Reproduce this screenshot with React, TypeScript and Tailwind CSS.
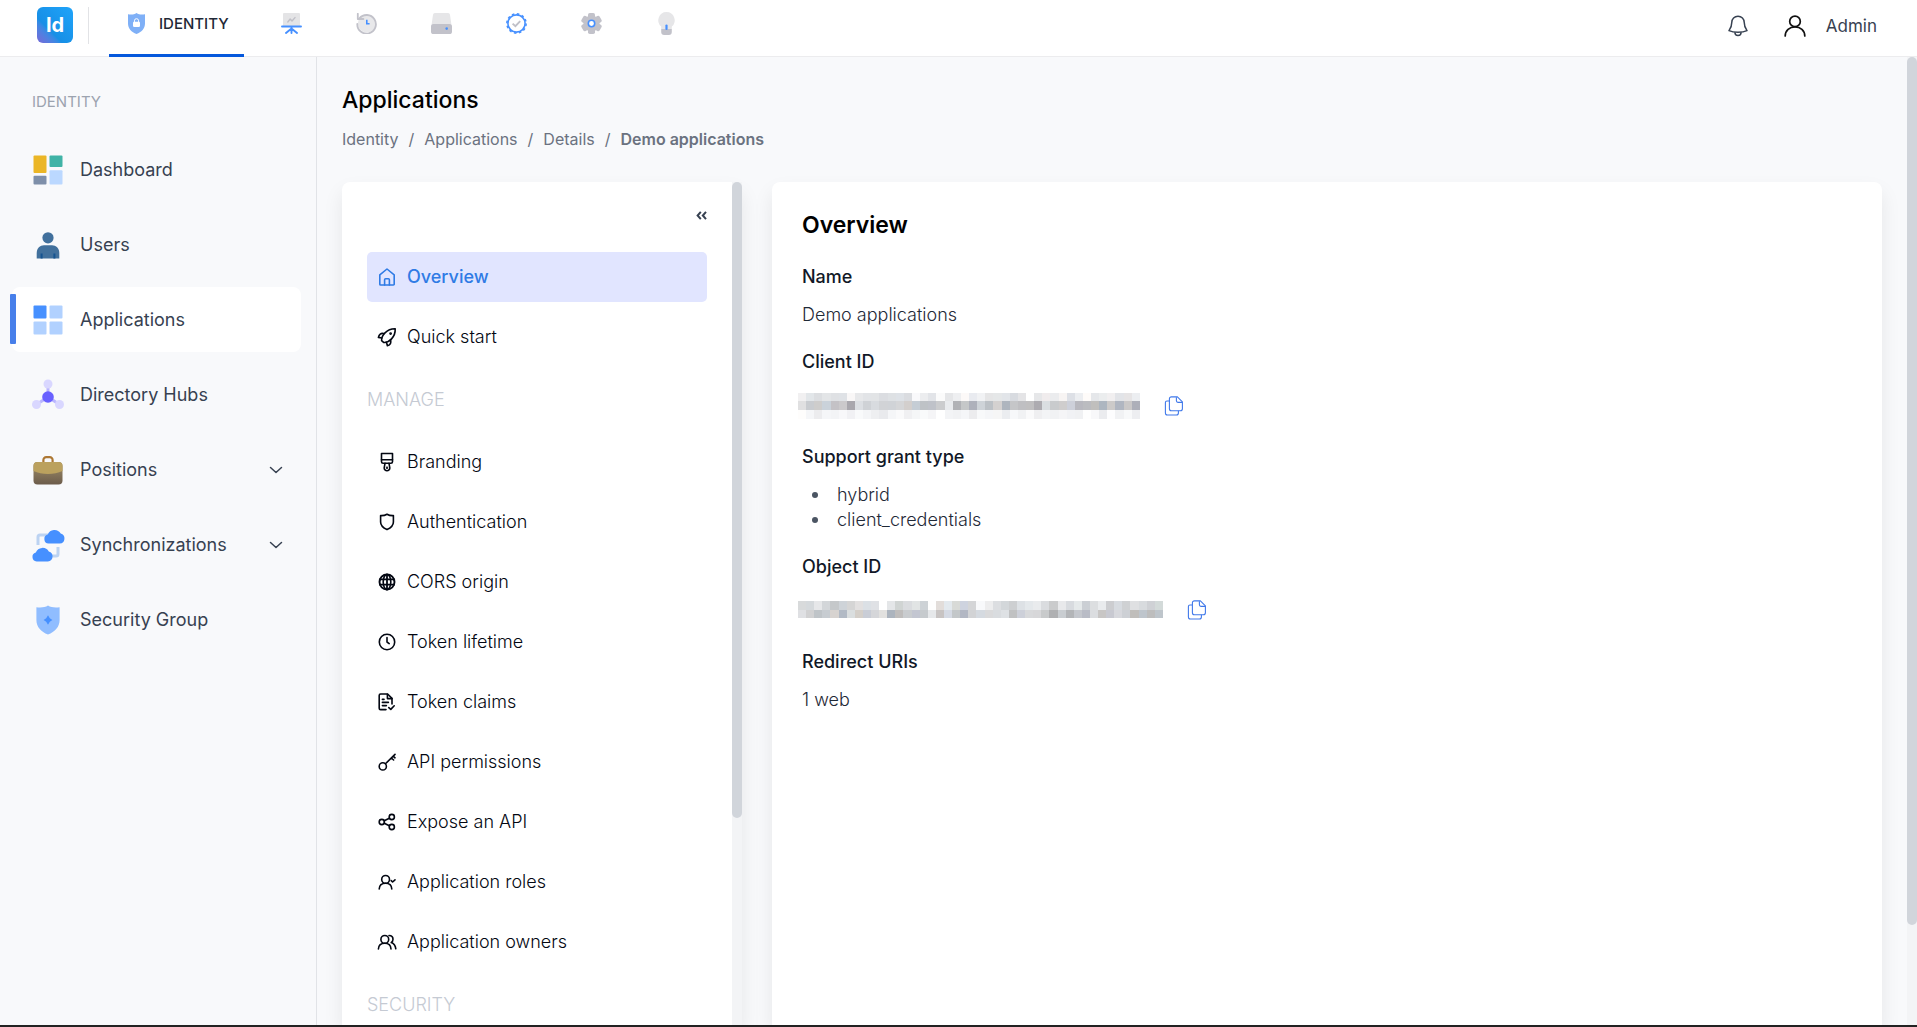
import React, { useState } from 'react';

/* ---------- header icons ---------- */

const ShieldLockIcon = () => (
  <svg width="21" height="21" viewBox="0 0 21 21" fill="none">
    <path d="M10.5 0 C8 1.7 5.2 1.8 2 1.2 V10.5 C2 15.6 5.5 19 10.5 21 C15.5 19 19 15.6 19 10.5 V1.2 C15.8 1.8 13 1.7 10.5 0 Z" fill="#7fb0f7" />
    <path d="M8.4 9.5 V7.8 a2.1 2.1 0 0 1 4.2 0 V9.5" stroke="#fff" strokeWidth="1" />
    <rect x="7" y="8.8" width="7" height="5.2" rx="1.2" fill="#fff" />
  </svg>
);

const BoardIcon = () => (
  <svg width="21" height="21" viewBox="0 0 21 21" fill="none">
    <path d="M2 1 A1 1 0 0 1 3 0 H18 A1 1 0 0 1 19 1 V13 H2 Z" fill="#e4e4e6" />
    <path d="M6.8 9 L9.2 6 L11 8 L14 4.6" stroke="#c0c0c8" strokeWidth="1.4" strokeLinecap="round" strokeLinejoin="round" />
    <path d="M1 13.5 H20 M10.5 13.5 V20 M10.5 15.5 L5 20 M10.5 15.5 L16 20" stroke="#4690ff" strokeWidth="1.9" strokeLinecap="round" />
  </svg>
);

const HistoryIcon = () => (
  <svg width="21" height="21" viewBox="0 0 21 21" fill="none">
    <circle cx="10.8" cy="10.5" r="9" fill="#e8e8ea" />
    <path d="M3.4 5.4 A9.3 9.3 0 1 1 1.3 10.8" stroke="#c2c2ca" strokeWidth="1.8" strokeLinecap="round" />
    <path d="M1.8 0.8 V6 H7.4" stroke="#c2c2ca" strokeWidth="1.8" strokeLinecap="round" strokeLinejoin="round" />
    <path d="M10.8 6.8 V10.8 H13.6" stroke="#4690ff" strokeWidth="1.6" />
  </svg>
);

const DriveIcon = () => (
  <svg width="21" height="21" viewBox="0 0 21 21" fill="none">
    <path d="M4 0 H17 A2 2 0 0 1 19 1.7 L20.6 13 H0.4 L2 1.7 A2 2 0 0 1 4 0 Z" fill="#e6e6e8" />
    <rect y="11" width="21" height="10" rx="2.6" fill="#c2c2ca" />
    <circle cx="15.7" cy="15.6" r="1.3" fill="#4690ff" />
  </svg>
);

const BadgeIcon = () => (
  <svg width="21" height="21" viewBox="0 0 21 21" fill="none">
    <circle cx="10.5" cy="10.5" r="8.6" stroke="#4690ff" strokeWidth="1.6" />
    <circle cx="10.5" cy="10.5" r="9.6" stroke="#4690ff" strokeWidth="1.6" strokeDasharray="2.5 2.53" />
    <path d="M6.6 10.6 L9.4 13.2 L14.2 8.2" stroke="#c0c0c8" strokeWidth="1.9" />
  </svg>
);

const GearIcon = () => (
  <svg width="21" height="21" viewBox="0 0 21 21" fill="none">
    <g fill="#c2c2ca">
      <circle cx="10.5" cy="10.5" r="8" />
      <rect x="7" width="7" height="21" rx="1.8" />
      <rect x="7" width="7" height="21" rx="1.8" transform="rotate(60 10.5 10.5)" />
      <rect x="7" width="7" height="21" rx="1.8" transform="rotate(120 10.5 10.5)" />
    </g>
    <circle cx="10.5" cy="10.5" r="3.2" fill="#fff" stroke="#4690ff" strokeWidth="1.6" />
  </svg>
);

const BulbIcon = () => (
  <svg width="21" height="23" viewBox="0 0 21 23" fill="none">
    <path d="M10.5 0 A8.3 8.3 0 0 1 15.8 14.6 V17 H5.2 V14.6 A8.3 8.3 0 0 1 10.5 0 Z" fill="#e6e6e8" />
    <path d="M5.2 17 H15.8 V20 A3 3 0 0 1 12.8 23 H8.2 A3 3 0 0 1 5.2 20 Z" fill="#c2c2ca" />
    <path d="M10.5 17 V13.5" stroke="#4690ff" strokeWidth="2.2" strokeLinecap="round" />
  </svg>
);

const BellIcon = () => (
  <svg width="20" height="22" viewBox="0 0 20 22" fill="none" stroke="#374151" strokeWidth="1.5" strokeLinejoin="round">
    <path d="M10 1.2 C6.4 1.2 3.8 3.8 3.8 7.3 C3.8 11 3.4 12.6 1 15.6 C3.6 16.8 6.6 17.2 10 17.2 C13.4 17.2 16.4 16.8 19 15.6 C16.6 12.6 16.2 11 16.2 7.3 C16.2 3.8 13.6 1.2 10 1.2 Z" />
    <path d="M6.9 17.2 a3.1 3.3 0 0 0 6.2 0" />
  </svg>
);

const UserIcon = () => (
  <svg width="22" height="22" viewBox="0 0 22 22" fill="none" stroke="#111" strokeWidth="1.7" strokeLinecap="round">
    <circle cx="11" cy="6.4" r="5.3" />
    <path d="M1.2 21 C1.2 15.5 5.6 11.8 11 11.8 C16.4 11.8 20.8 15.5 20.8 21" />
  </svg>
);

/* ---------- sidebar icons ---------- */

const DashboardIcon = () => (
  <svg width="32" height="32" viewBox="0 0 32 32">
    <rect x="1.5" y="1.5" width="13" height="17.5" rx="1" fill="#ebb626" />
    <rect x="1.5" y="21.7" width="13" height="8.8" rx="1" fill="#7e8fa9" />
    <rect x="17.5" y="1.5" width="13" height="11.5" rx="1" fill="#40b3a6" />
    <rect x="17.5" y="16.3" width="13" height="14.2" rx="1" fill="#bbd8ff" />
  </svg>
);

const UsersIcon = () => (
  <svg width="32" height="32" viewBox="0 0 32 32">
    <circle cx="16" cy="8.8" r="5.6" fill="#41709c" />
    <path d="M4.7 29.5 V24 C4.7 19 8 16.2 12 16.2 H20 C24 16.2 27.3 19 27.3 24 V29.5 Z" fill="#41709c" />
    <path d="M8.6 24.5 h2 v5 h-2 z M21.4 24.5 h2 v5 h-2 z" fill="#145390" />
  </svg>
);

const ApplicationsIcon = () => (
  <svg width="32" height="32" viewBox="0 0 32 32">
    <rect x="1.5" y="1.5" width="13" height="13" rx="1" fill="#4690ff" />
    <g fill="#b1d1ff">
      <rect x="17.5" y="1.5" width="13" height="13" rx="1" />
      <rect x="1.5" y="17.5" width="13" height="13" rx="1" />
      <rect x="17.5" y="17.5" width="13" height="13" rx="1" />
    </g>
  </svg>
);

const HubIcon = () => (
  <svg width="32" height="32" viewBox="0 0 32 32">
    <path d="M16 18 V6 M16 18 L4.5 25.5 M16 18 L27.5 25.5" stroke="#b9b5ff" strokeWidth="3" />
    <g fill="#d9d7ff">
      <circle cx="16" cy="5" r="4.5" />
      <circle cx="4.5" cy="25.5" r="4.5" />
      <circle cx="27.5" cy="25.5" r="4.5" />
    </g>
    <circle cx="16" cy="18" r="5.8" fill="#6961ff" />
  </svg>
);

const BriefcaseIcon = () => (
  <svg width="32" height="32" viewBox="0 0 32 32" fill="none">
    <defs>
      <linearGradient id="case" x1="0" y1="0" x2="0" y2="1">
        <stop offset="0.4" stopColor="#8b7a5c" />
        <stop offset="1" stopColor="#6c5c4b" />
      </linearGradient>
    </defs>
    <path d="M11.4 8 V6 a2.8 2.8 0 0 1 2.8 -2.8 h3.6 A2.8 2.8 0 0 1 20.6 6 V8" stroke="#ad7834" strokeWidth="2.2" />
    <rect x="1.5" y="8" width="29" height="22.5" rx="4" fill="url(#case)" />
    <path d="M1.5 17 V12 a4 4 0 0 1 4 -4 h21 a4 4 0 0 1 4 4 V17 C22 21 10 21 1.5 17 Z" fill="#bba15e" />
  </svg>
);

const SyncIcon = () => (
  <svg width="34" height="34" viewBox="0 0 34 34" fill="none" className="shrink-0">
    <path d="M7 17 V9 a2 2 0 0 1 2 -2 H17 M27 19 V26 a2 2 0 0 1 -2 2 H19" stroke="#bcd3f2" strokeWidth="3" />
    <g fill="#4690ff">
      <path d="M17.5 15.6 a4.6 4.6 0 0 1 -0.8 -9 a7.3 7.3 0 0 1 13 -1 a5.1 5.1 0 0 1 -0.9 10 Z" />
      <path d="M5.6 33.4 a4.6 4.6 0 0 1 -0.8 -9 a7.3 7.3 0 0 1 13 -1 a5.1 5.1 0 0 1 -0.9 10 Z" />
    </g>
  </svg>
);

const SecurityIcon = () => (
  <svg width="32" height="32" viewBox="0 0 32 32">
    <path d="M16 1.5 C13 3.4 9 3.8 4.4 3.2 V16 C4.4 23 9 27.8 16 30.5 C23 27.8 27.6 23 27.6 16 V3.2 C23 3.8 19 3.4 16 1.5 Z" fill="#90bdff" />
    <path d="M16 11.2 L17.8 14.2 L20.4 16 L17.8 17.8 L16 20.8 L14.2 17.8 L11.6 16 L14.2 14.2 Z" fill="#4690ff" />
  </svg>
);

const ChevronIcon = () => (
  <svg width="14" height="8" viewBox="0 0 14 8" fill="none" stroke="#374151" strokeWidth="1.5" strokeLinecap="round" strokeLinejoin="round">
    <path d="M1.5 1.5 L7 6.5 L12.5 1.5" />
  </svg>
);

/* ---------- application menu icons ---------- */

const Line = ({ children }: { children: React.ReactNode }) => (
  <svg width="20" height="20" viewBox="0 0 20 20" fill="none" stroke="currentColor" strokeWidth="1.6" strokeLinecap="round" strokeLinejoin="round" className="shrink-0">
    {children}
  </svg>
);

const HomeIcon = () => (
  <Line>
    <path d="M10 2 L2.8 7.8 V17.2 a0.8 0.8 0 0 0 0.8 0.8 H16.4 a0.8 0.8 0 0 0 0.8 -0.8 V7.8 Z" />
    <path d="M7.6 18 V12.8 a1 1 0 0 1 1 -1 H11.4 a1 1 0 0 1 1 1 V18" />
  </Line>
);

const RocketIcon = () => (
  <Line>
    <path d="M4.6 13.6 C4.2 9 9.5 1.6 18.2 1.8 C18.6 10 12 16 6.6 15.4 Z" />
    <path d="M6.6 6.6 C4 5.8 2 7.6 1.4 10.4 L4.8 11 M13.6 13.2 C14.4 16 12.8 18 10.4 18.8 L9.4 15.2" />
    <circle cx="13.6" cy="6.6" r="0.6" />
  </Line>
);

const BrushIcon = () => (
  <Line>
    <path d="M4.5 1.5 H15.5 V9.7 a1.6 1.6 0 0 1 -1.6 1.6 H6.1 a1.6 1.6 0 0 1 -1.6 -1.6 Z" />
    <path d="M4.5 7.7 H15.5 M8 11.3 L7.2 15.9 a2.8 2.8 0 1 0 5.6 0 L12 11.3" />
    <circle cx="10" cy="15.8" r="0.4" />
  </Line>
);

const ShieldIcon = () => (
  <Line>
    <path d="M10 2.2 C8 3.4 6 3.7 3.6 3.6 V10 C3.6 13.6 6.4 16 10 17.6 C13.6 16 16.4 13.6 16.4 10 V3.6 C14 3.7 12 3.4 10 2.2 Z" />
  </Line>
);

const GlobeIcon = () => (
  <Line>
    <circle cx="10" cy="10" r="7.5" strokeWidth="1.9" />
    <ellipse cx="10" cy="10" rx="3.8" ry="7.5" />
    <path d="M10 2.5 V17.5 M3 7.3 H17 M3 12.7 H17" strokeWidth="1.8" />
  </Line>
);

const ClockIcon = () => (
  <Line>
    <circle cx="10" cy="10" r="7.7" />
    <path d="M10 5.6 V10 L12.2 11.6" />
  </Line>
);

const ClaimsIcon = () => (
  <Line>
    <path d="M9 17.6 H3.6 a1.4 1.4 0 0 1 -1.4 -1.4 V3.4 A1.4 1.4 0 0 1 3.6 2 H10.6 L15 6.4 V12" />
    <path d="M10.4 2.2 V6.6 H15 M5.4 7.4 H7 M5.4 10.4 H11.4 M5.4 13.6 H9.4 M11.8 15.6 L13.8 17.4 L17.2 13.8" />
  </Line>
);

const KeyIcon = () => (
  <Line>
    <circle cx="5.8" cy="14.4" r="3.6" />
    <path d="M8.4 11.8 L18 2.4 M14.4 6 L16.6 8 M16.2 4.2 L18 5.8" />
  </Line>
);

const ShareIcon = () => (
  <Line>
    <circle cx="4.8" cy="10" r="2.6" />
    <circle cx="14.8" cy="5" r="2.6" />
    <circle cx="14.8" cy="15" r="2.6" />
    <path d="M7.2 8.8 L12.4 6.2 M7.2 11.2 L12.4 13.8" />
  </Line>
);

const RolesIcon = () => (
  <Line>
    <circle cx="8.6" cy="7.4" r="3.9" />
    <path d="M2.2 17 C2.4 13.6 4.8 11.3 8.6 11.3 C12.4 11.3 14.6 13.6 14.8 17 M14.2 8.6 L15.6 10 L18 7.8" />
  </Line>
);

const OwnersIcon = () => (
  <Line>
    <circle cx="7.8" cy="7.4" r="3.9" />
    <path d="M1.4 17 C1.6 13.6 4 11.3 7.8 11.3 C11.6 11.3 13.8 13.6 14 17 M12 3.5 C14.6 3.6 16 5.2 16 7.2 C16 8.6 15.4 9.8 14.2 10.6 C16.8 11.6 18.4 13.6 18.8 16.8" />
  </Line>
);

const CopyIcon = () => (
  <svg width="20" height="20" viewBox="0 0 20 20" fill="none" stroke="#4079ea" strokeWidth="1.1" strokeLinejoin="round">
    <path d="M7.4 0.9 H13.4 L18.4 5.8 V12.8 a2 2 0 0 1 -2 2 H7.4 a2 2 0 0 1 -2 -2 V2.9 a2 2 0 0 1 2 -2 Z" />
    <path d="M12.4 1.2 V4.8 a1.6 1.6 0 0 0 1.6 1.6 H18.2 M5.4 5 H3 a1.6 1.6 0 0 0 -1.6 1.6 V17 a2 2 0 0 0 2 2 H12.4 a2 2 0 0 0 2 -2 V14.8" />
  </svg>
);

/* ---------- data ---------- */

const modules = [
  { label: 'Meetings', icon: <BoardIcon /> },
  { label: 'History', icon: <HistoryIcon /> },
  { label: 'Storage', icon: <DriveIcon /> },
  { label: 'Certificates', icon: <BadgeIcon /> },
  { label: 'Settings', icon: <GearIcon /> },
  { label: 'Tips', icon: <BulbIcon /> },
];

const sidebarItems = [
  { label: 'Dashboard', icon: <DashboardIcon /> },
  { label: 'Users', icon: <UsersIcon /> },
  { label: 'Applications', icon: <ApplicationsIcon /> },
  { label: 'Directory Hubs', icon: <HubIcon /> },
  { label: 'Positions', icon: <BriefcaseIcon />, expandable: true },
  { label: 'Synchronizations', icon: <SyncIcon />, expandable: true },
  { label: 'Security Group', icon: <SecurityIcon /> },
];

const generalItems = [
  { label: 'Overview', icon: <HomeIcon /> },
  { label: 'Quick start', icon: <RocketIcon /> },
];

const manageItems = [
  { label: 'Branding', icon: <BrushIcon /> },
  { label: 'Authentication', icon: <ShieldIcon /> },
  { label: 'CORS origin', icon: <GlobeIcon /> },
  { label: 'Token lifetime', icon: <ClockIcon /> },
  { label: 'Token claims', icon: <ClaimsIcon /> },
  { label: 'API permissions', icon: <KeyIcon /> },
  { label: 'Expose an API', icon: <ShareIcon /> },
  { label: 'Application roles', icon: <RolesIcon /> },
  { label: 'Application owners', icon: <OwnersIcon /> },
];

const grantTypes = ['hybrid', 'client_credentials'];

// Masked identifiers, one colour per block
const clientIdMask = [
  'f1f0f1 e2e6e9 dcdee1 e3e5e7 dfe1e4 dfe2e6 f9f7f7 e7e8ea e2e4e7 e2e4e6 dbdde1 dee1e4 dee2e7 dadce0 f9f9fb ecedef e2e4e8 fbfbfb e5e6e8 eeeff1 fcf9f8 e9ebf0 f1f2f4 e5e5e6 e5e7e8 e2e5e9 d8dbe0 e4e4e6 ffffff e6e7e9 f0eced ebecee f7f4f3 dde0e6 eceef1 fefbf9 e5e7ea ebedee f1eff0 e2e4e8 e6e4e5 eceef1',
  'e0e0e1 c9ccd0 cecdcc cad2da c4c2c6 cbc9cb a9a7ad dcdfe3 cfd2d6 d8dbdf d1d3d6 d0d3d7 d5d6d8 d3cfcd c5cdd5 bec2c6 bfc2c9 cbccce e9ebee b1b2b6 c5c7c8 aeb1bb ced3d8 bcc1c6 d4d1d0 aeb5be c5c6c8 bfbfc2 c0bfc0 adabb0 dadee1 c9cbcd cfcdcd cdd0da b8b8bf bbbcc0 c0bfbd adb6c0 cccac9 b0b6c1 cac8c8 adafb9',
  'fefdfc f5f6f8 ececee f5f6f8 f3f4f6 f8f8fa f1f1f4 f9fafb f4f5f7 eeeff1 e9eaed f5f6f8 fafafb f0f0f2 f5f6f7 f9fafb f5f5f7 ffffff f3f4f6 f1f2f4 f5f6f8 ececee f8f9fa f5f6f8 f6f6f6 ebedf0 f7f8fa f1f2f4 fafafb efeff1 f3f4f6 f1f2f4 f5f5f7 f1f2f5 f0f1f3 fefefe f8f8fa ebecef fdfdfe f1f2f4 f8f9fa edeef1',
];

const objectIdMask = [
  'd8dadb d5d9dc e6e7e9 d3d6d9 c5c8ca ced3d8 d5d5d5 e2e0e0 dbe0e5 dfe1e5 ffffff e4e6e8 d0d4d3 dadcdf e1e4e4 cdd2d6 fefefe e2ddda e3e9ee d8dad7 ced3df d4d5d7 f8f9fb ededee dcdee1 d3d7da cdcfd1 dde1e5 e4e8eb e9ebed dadcdf cacbcc e8e9eb d8dbdf e5e9ea cbcfd4 dcdee0 e9ebed cccdd0 d7dbe0 cfd1d3 dfe0e2 d8dbde cfd1d5 d3dad9',
  'dfe0e3 d1d1d2 bfc4c8 c7ccd1 d7d3d0 b2bac5 dadedf d4cfc9 c9cdd6 d5d6d9 e2e1df acb4be bfbdbc c9cccf c3c6d1 c6cacd e6e8ea c8c4c3 d5dae4 c3c7c9 b2b7c3 d2d3d5 d5dae0 dadadb d9dcdf dee1e4 c0c1c2 cdd0d9 d8d9db d7d7d9 c8cacb afb0b2 c9cdd1 b3b5b8 c4c7cd b9bcc6 dbdde0 c8c6c5 c8c9d1 d7d8dd cdd0d5 c0bebb bec5cc bdbdbd bec5cb',
];

const Mask = ({ rows, className }: { rows: string[]; className: string }) => (
  <div className={`-ml-1 flex flex-col ${className}`}>
    {rows.map((row, i) => (
      <div key={i} className="flex flex-1">
        {row.split(' ').map((color, j) => (
          <div key={j} className="flex-1" style={{ backgroundColor: `#${color}` }} />
        ))}
      </div>
    ))}
  </div>
);

interface MenuItemProps {
  label: string;
  icon: React.ReactNode;
  active: boolean;
  onClick: () => void;
}

const MenuItem = ({ label, icon, active, onClick }: MenuItemProps) => (
  <button
    onClick={onClick}
    className={`flex h-[50px] w-full items-center gap-[10px] rounded-[5px] px-[10px] pb-px text-left ${
      active ? 'bg-[#e1e5ff] font-medium text-[#2f7be5]' : 'font-light text-[#030712]'
    }`}
  >
    {icon}
    <span>{label}</span>
  </button>
);

const Field = ({ label, children }: { label: string; children: React.ReactNode }) => (
  <div>
    <dt className="mb-[13px] font-medium text-[#111827]">{label}</dt>
    <dd className="font-light text-[#1f2937]">{children}</dd>
  </div>
);

export default function App() {
  const [section, setSection] = useState('Applications');
  const [page, setPage] = useState('Overview');

  return (
    <div className="flex h-screen flex-col overflow-hidden border-b-2 border-[#222] bg-[#f8f9fb] font-['Inter',sans-serif] text-[18px] leading-[25px]">
      <header className="flex h-[57px] shrink-0 items-center border-b border-[#ececee] bg-white pr-10 pl-[37px]">
        <a
          href="#"
          className="mb-1.5 flex size-9 items-center justify-center rounded-md bg-linear-to-tr from-[#7468d8] via-[#178fe6] via-35% to-[#1fa4fa] text-[20px] font-bold text-white"
        >
          Id
        </a>
        <div className="mb-1.5 ml-[15px] h-[37px] w-px bg-[#e2e3e6]" />
        <nav className="ml-5 flex h-[57px] gap-5">
          <button className="flex items-center gap-[12px] border-b-3 border-[#0558dc] pr-[15px] pb-[6px] pl-[17px] text-[15px] font-medium text-[#1f2937]">
            <ShieldLockIcon />
            IDENTITY
          </button>
          {modules.map((module) => (
            <button key={module.label} aria-label={module.label} className="flex w-[55px] items-center justify-center pb-[9px]">
              {module.icon}
            </button>
          ))}
        </nav>
        <div className="ml-auto flex items-center pb-1">
          <button aria-label="Notifications">
            <BellIcon />
          </button>
          <button className="ml-9 flex items-center gap-5 text-[17px] text-[#374151]">
            <UserIcon />
            Admin
          </button>
        </div>
      </header>

      <div className="flex min-h-0 flex-1">
        <aside className="w-[317px] shrink-0 border-r border-[#e1e3e7] pt-8 pr-[15px] pl-3">
          <h2 className="ml-5 text-[15px] leading-[25px] text-[#9ca3af]">IDENTITY</h2>
          <nav className="mt-[23px] flex flex-col gap-[10px]">
            {sidebarItems.map((item) => {
              const active = section === item.label;
              return (
                <button
                  key={item.label}
                  onClick={() => setSection(item.label)}
                  className={`relative flex h-[65px] items-center rounded-lg pr-[18px] pl-[19px] text-left text-[#374151] ${active ? 'bg-white' : ''}`}
                >
                  {active && <span className="absolute top-[7px] -left-0.5 h-[50px] w-1.5 rounded-[1px] bg-[#477fea]" />}
                  <span className="flex w-[33px] justify-center">{item.icon}</span>
                  <span className="ml-4 flex-1">{item.label}</span>
                  {item.expandable && <ChevronIcon />}
                </button>
              );
            })}
          </nav>
        </aside>

        <main className="flex min-w-0 flex-1 flex-col pt-7 pl-[25px]">
          <h1 className="text-[23px] leading-[30px] font-medium text-black">Applications</h1>
          <nav className="mt-3 flex gap-[10px] text-[16px] leading-6 text-[#6b7280]">
            <a href="#">Identity</a>
            <span>/</span>
            <a href="#">Applications</a>
            <span>/</span>
            <a href="#">Details</a>
            <span>/</span>
            <span className="font-semibold">Demo applications</span>
          </nav>

          <div className="mt-[31px] flex min-h-0 flex-1 gap-[30px] pr-[25px]">
            <section className="flex w-[400px] shrink-0 rounded-t-lg bg-white shadow-[0_10px_20px_rgba(0,0,0,0.08)]">
              <div className="min-w-0 flex-1 overflow-hidden p-[25px]">
                <div className="flex h-[45px] justify-end">
                  <button aria-label="Collapse menu" className="flex size-4 items-center justify-end">
                    <svg width="11" height="9" viewBox="0 0 11 9" fill="none" stroke="#374151" strokeWidth="2">
                      <path d="M4.8 0.8 L1.6 4.5 L4.8 8.2 M10 0.8 L6.8 4.5 L10 8.2" />
                    </svg>
                  </button>
                </div>
                <div className="flex flex-col gap-[10px]">
                  {generalItems.map((item) => (
                    <MenuItem key={item.label} {...item} active={page === item.label} onClick={() => setPage(item.label)} />
                  ))}
                </div>
                <h3 className="my-[25px] font-light text-[#c5cad3]">MANAGE</h3>
                <div className="flex flex-col gap-[10px]">
                  {manageItems.map((item) => (
                    <MenuItem key={item.label} {...item} active={page === item.label} onClick={() => setPage(item.label)} />
                  ))}
                </div>
                <h3 className="my-[25px] font-light text-[#c5cad3]">SECURITY</h3>
              </div>
              <div className="w-[10px] shrink-0 bg-[#f3f4f6]">
                <div className="h-[636px] max-h-full rounded-full bg-[#d1d5db]" />
              </div>
            </section>

            <section className="min-w-0 flex-1 rounded-t-lg bg-white px-[30px] pt-7 shadow-[0_10px_20px_rgba(0,0,0,0.08)]">
              <h2 className="text-[23px] leading-[30px] font-semibold text-black">Overview</h2>
              <dl className="mt-6 flex flex-col gap-[22px]">
                <Field label="Name">Demo applications</Field>
                <Field label="Client ID">
                  <div className="flex h-[35px] items-center gap-6 pt-0.5">
                    <Mask rows={clientIdMask} className="h-[26px] w-[342px]" />
                    <button aria-label="Copy client ID">
                      <CopyIcon />
                    </button>
                  </div>
                </Field>
                <Field label="Support grant type">
                  <ul>
                    {grantTypes.map((type) => (
                      <li key={type} className="flex items-center pl-[10px]">
                        <span className="mr-[19px] size-1.5 rounded-full bg-[#4b5563]" />
                        {type}
                      </li>
                    ))}
                  </ul>
                </Field>
                <Field label="Object ID">
                  <div className="flex h-[35px] items-center gap-6">
                    <Mask rows={objectIdMask} className="h-[17px] w-[365px]" />
                    <button aria-label="Copy object ID">
                      <CopyIcon />
                    </button>
                  </div>
                </Field>
                <Field label="Redirect URIs">1 web</Field>
              </dl>
            </section>
          </div>
        </main>

        <div className="w-[10px] shrink-0 bg-[#f3f4f6]">
          <div className="h-[868px] max-h-full rounded-full bg-[#d1d5db]" />
        </div>
      </div>
    </div>
  );
}
